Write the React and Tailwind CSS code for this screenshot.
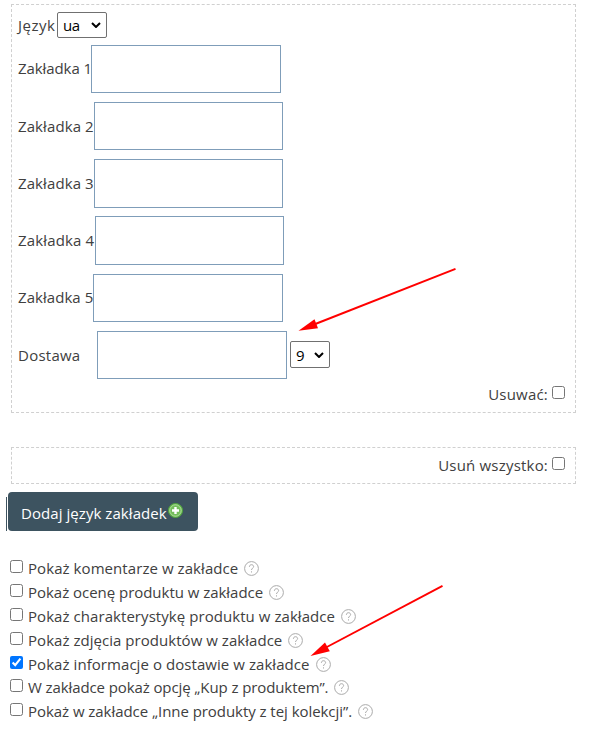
import { useState } from "react";

const TABS = [
  { label: "Zakładka 1", text: "w-[73px] pt-[13px] tracking-[-0.08px]", row: "h-[57px]", input: "w-[190px] h-12" },
  { label: "Zakładka 2", text: "w-[76px] pt-[14px] tracking-[0.1px]", row: "h-[57px]", input: "w-[189px] h-12" },
  { label: "Zakładka 3", text: "w-[76px] pt-[14px] tracking-[0.1px]", row: "h-[57px]", input: "w-[189px] h-[49px]" },
  { label: "Zakładka 4", text: "w-[77px] pt-[14px] tracking-[0.15px]", row: "h-[58px]", input: "w-[189px] h-[49px]" },
  { label: "Zakładka 5", text: "w-[75px] pt-[13px] tracking-[0.05px]", row: "h-[57px]", input: "w-[190px] h-12" },
];

const OPTIONS = [
  { id: "comments", label: "Pokaż komentarze w zakładce", tracking: "tracking-[0.07px]", row: "h-6" },
  { id: "rating", label: "Pokaż ocenę produktu w zakładce", tracking: "tracking-[-0.03px]", row: "h-6" },
  { id: "specs", label: "Pokaż charakterystykę produktu w zakładce", tracking: "tracking-[0.06px]", row: "h-6" },
  { id: "photos", label: "Pokaż zdjęcia produktów w zakładce", tracking: "tracking-[0.04px]", row: "h-6" },
  { id: "delivery", label: "Pokaż informacje o dostawie w zakładce", tracking: "tracking-[0.06px]", row: "h-[23px]" },
  { id: "bundle", label: "W zakładce pokaż opcję „Kup z produktem”.", tracking: "tracking-[-0.1px]", row: "h-6" },
  { id: "collection", label: "Pokaż w zakładce „Inne produkty z tej kolekcji”.", tracking: "tracking-[-0.05px]", row: "h-6" },
];

function Checkbox({ checked, onChange, label }) {
  return (
    <input
      type="checkbox"
      aria-label={label}
      checked={checked}
      onChange={onChange}
      className="size-[13px] shrink-0"
    />
  );
}

function Select({ value, className }) {
  return (
    <button
      type="button"
      className={`flex shrink-0 items-center justify-between rounded-[2px] border border-[#707070] bg-white pl-[5px] text-black ${className}`}
    >
      <span className="tracking-[-0.5px]">{value}</span>
      <svg width="10" height="6" viewBox="0 0 10 6" fill="none">
        <path d="M1 1l4 4 4-4" stroke="#000" strokeWidth="2" />
      </svg>
    </button>
  );
}

function HelpIcon() {
  return (
    <svg width="15" height="15" viewBox="0 0 15 15" fill="none" className="shrink-0">
      <circle cx="7.5" cy="7.5" r="6.9" stroke="#aaa" />
      <path
        d="M5.4 5.8c0-1.3.9-2.1 2.1-2.1s2.1.8 2.1 1.9c0 1.5-2.1 1.7-2.1 3.4"
        stroke="#aaa"
      />
      <path d="M7.5 10.3v1.2" stroke="#aaa" />
    </svg>
  );
}

function AddIcon() {
  return (
    <svg width="15" height="15" viewBox="0 0 15 15" fill="none" className="shrink-0">
      <circle cx="7.5" cy="7.5" r="7" fill="#74bd5c" stroke="#4fa53c" />
      <circle cx="7.5" cy="7.5" r="5.7" stroke="#b9e2a8" strokeWidth=".8" />
      <path d="M7.5 4v7M4 7.5h7" stroke="#fff" strokeWidth="2.4" />
    </svg>
  );
}

// Red pointers drawn over the form
function Arrows() {
  return (
    <svg
      width="596"
      height="729"
      viewBox="0 0 596 729"
      className="pointer-events-none absolute top-0 left-0"
    >
      <g stroke="#f00" fill="#f00">
        <path d="M455.500 268.800L314 324.500" strokeWidth="1.900" />
        <path d="M298.500 330.700L314.500 319.200L318 328.300Z" stroke="none" />
        <path d="M442.500 585.800L325 648" strokeWidth="1.900" />
        <path d="M310.500 656L325 642.400L329.800 651.200Z" stroke="none" />
      </g>
    </svg>
  );
}

export default function App() {
  const [checked, setChecked] = useState({ delivery: true });

  const toggle = (id) => setChecked({ ...checked, [id]: !checked[id] });

  return (
    <div className="relative h-[729px] w-[596px] overflow-hidden bg-white pt-1 font-['Open_Sans','Noto_Sans',sans-serif] text-[15px] leading-5 text-[#404040]">
      <section className="ml-[11px] h-[409px] w-[565px] border border-dashed border-[#d0d0d0] pt-[7px] pl-[6px]">
        <div className="flex h-[33px] items-start">
          <span className="w-[39px] pt-[3px] tracking-[0.5px] whitespace-nowrap">Język</span>
          <Select value="ua" className="h-[26px] w-[50px] pr-[5px]" />
        </div>
        {TABS.map((tab) => (
          <div key={tab.label} className={`flex items-start ${tab.row}`}>
            <span className={`shrink-0 whitespace-nowrap ${tab.text}`}>{tab.label}</span>
            <input aria-label={tab.label} className={`border border-[#7f9db9] ${tab.input}`} />
          </div>
        ))}
        <div className="flex h-[55px] items-start">
          <span className="w-[79px] shrink-0 pt-[14px] tracking-[0.25px]">Dostawa</span>
          <input aria-label="Dostawa" className="h-12 w-[190px] border border-[#7f9db9]" />
          <div className="pt-[10px] pl-[3px]">
            <Select value="9" className="h-[27px] w-10 pr-[5px]" />
          </div>
        </div>
        <div className="flex justify-end gap-1 pr-[10px]">
          <span className="-mt-[2px] tracking-[0.2px]">Usuwać:</span>
          <Checkbox
            label="Usuwać"
            checked={!!checked.remove}
            onChange={() => toggle("remove")}
          />
        </div>
      </section>

      <section className="mt-[34px] ml-[11px] flex h-[37px] w-[565px] justify-end gap-1 border border-dashed border-[#d0d0d0] pt-[9px] pr-[10px]">
        <span className="-mt-[2px] tracking-[0.2px]">Usuń wszystko:</span>
        <Checkbox
          label="Usuń wszystko"
          checked={!!checked.removeAll}
          onChange={() => toggle("removeAll")}
        />
      </section>

      <div className="mt-2 ml-[6px] flex h-[39px] gap-px">
        <div className="mt-[5px] w-px bg-[#3d5360]" />
        <button
          type="button"
          className="flex w-[190px] rounded bg-[#3d5360] pt-[11px] pl-[13px] font-medium text-white"
        >
          <span className="w-[147px] text-left tracking-[0.06px] whitespace-nowrap">
            Dodaj język zakładek
          </span>
          <AddIcon />
        </button>
      </div>

      <ul className="mt-[29px] ml-[10px]">
        {OPTIONS.map((option) => (
          <li key={option.id} className={`flex items-start ${option.row}`}>
            <Checkbox
              label={option.label}
              checked={!!checked[option.id]}
              onChange={() => toggle(option.id)}
            />
            <span className={`-mt-[2px] mr-[6px] ml-[5px] whitespace-nowrap ${option.tracking}`}>
              {option.label}
            </span>
            <span className="mt-px">
              <HelpIcon />
            </span>
          </li>
        ))}
      </ul>

      <Arrows />
    </div>
  );
}
